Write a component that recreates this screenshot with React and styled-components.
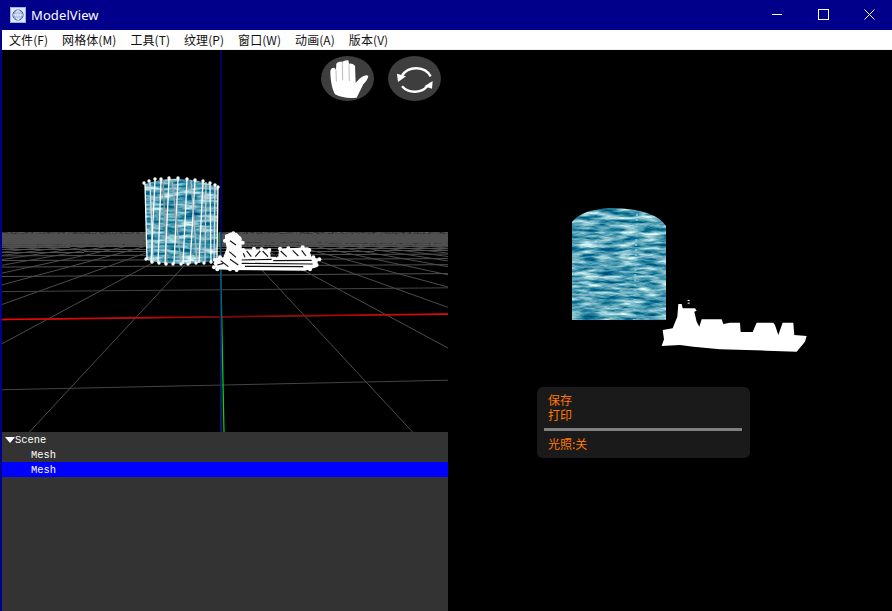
import React from "react"
import styled, { createGlobalStyle } from "styled-components"

const GlobalStyle = createGlobalStyle`
  html, body {
    margin: 0;
    padding: 0;
    background: #000;
    overflow: hidden;
  }
`

const Window = styled.div`
  width: 892px;
  height: 611px;
  display: flex;
  flex-direction: column;
  background: #00008b;
  font-family: "Noto Sans", "Noto Sans CJK SC", sans-serif;
`

const TitleBar = styled.div`
  height: 30px;
  display: flex;
  align-items: center;
  color: #fff;
  flex-shrink: 0;
`

const AppIcon = styled.svg`
  width: 16px;
  height: 16px;
  margin-left: 10px;
  margin-right: 5px;
`

const Title = styled.span`
  flex: 1;
  font-size: 13px;
  letter-spacing: 0.1px;
`

const WinButton = styled.div`
  width: 46px;
  height: 30px;
  display: flex;
  align-items: center;
  justify-content: center;
  padding-bottom: 2px;
  box-sizing: border-box;
`

const MinDash = styled.div`
  width: 10px;
  height: 1px;
  background: #fff;
`

const MaxBox = styled.div`
  width: 9px;
  height: 9px;
  border: 1px solid #fff;
`

const CloseIcon = styled.svg`
  width: 11px;
  height: 11px;
`

const MenuBar = styled.div`
  height: 19px;
  margin-left: 2px;
  background: #fff;
  border-bottom: 1px solid #f0f0f0;
  display: flex;
  align-items: center;
  flex-shrink: 0;
`

const MenuItem = styled.span`
  padding: 0 7px;
  font-size: 12px;
  line-height: 19px;
  letter-spacing: 0.07px;
  color: #111;
  font-family: "Noto Sans CJK SC", "Noto Sans", sans-serif;
`

const Body = styled.div`
  flex: 1;
  display: flex;
  margin-left: 2px;
  min-height: 0;
`

const LeftPane = styled.div`
  width: 446px;
  display: flex;
  flex-direction: column;
`

const Viewport = styled.div`
  position: relative;
  height: 382px;
  background: #000;
`

const Drawing = styled.svg`
  display: block;
  width: 100%;
  height: 100%;
`

const ToolButtons = styled.div`
  position: absolute;
  top: 6px;
  right: 7px;
  display: flex;
  gap: 14px;
`

const RoundButton = styled.div`
  width: 53px;
  height: 45px;
  border-radius: 50%;
  background: #3e3e3e;
`

const ButtonIcon = styled.svg`
  display: block;
  width: 65px;
  height: 55px;
  margin: -5px 0 0 -6px;
`

const Tree = styled.div`
  flex: 1;
  background: #333;
  color: #fff;
  font-family: "Liberation Mono", monospace;
  font-size: 10.4px;
`

const TreeRow = styled.div`
  height: 15px;
  box-sizing: border-box;
  padding-top: 2px;
  line-height: 13px;
  display: flex;
  align-items: center;
  padding-left: ${(p) => p.$indent}px;
  background: ${(p) => (p.$selected ? "#0000ff" : "transparent")};
`

const Arrow = styled.span`
  width: 0;
  height: 0;
  margin-bottom: 1px;
  border-left: 5px solid transparent;
  border-right: 5px solid transparent;
  border-top: 6px solid #fff;
`

const RightView = styled.div`
  position: relative;
  flex: 1;
  background: #000;
`

const FloatPanel = styled.div`
  position: absolute;
  left: 89px;
  top: 337px;
  width: 213px;
  height: 71px;
  box-sizing: border-box;
  padding: 5px 7px 0;
  background: #1a1a1a;
  border-radius: 6px;
  color: #ff7700;
  font-size: 12px;
  font-family: "Noto Sans CJK SC", sans-serif;
`

const PanelLine = styled.div`
  height: 15px;
  line-height: 15px;
  padding-left: 4px;
`

const Separator = styled.div`
  height: 3px;
  margin: 6px 1px 5px 0;
  background: #808080;
`

const menus = ["文件(F)", "网格体(M)", "工具(T)", "纹理(P)", "窗口(W)", "动画(A)", "版本(V)"]

// ground grid, projected by hand from the reference
const VX = 221
const VY = 226
const hLines = Array.from({ length: 24 }, (_, n) => 1 / (0.00629 + 0.0047 * n))
const radials = Array.from({ length: 81 }, (_, i) => i - 40)

function Ground() {
  return (
    <g clipPath="url(#groundClip)" strokeWidth="1">
      <rect x="2" y="232" width="446" height="15" filter="url(#gravel)" />
      {radials.map((k) => (
        <line key={k} x1={VX + k * 0.93 * 18} y1={244} x2={VX + k * 0.93 * 206} y2={432} stroke="#4c4c4c" />
      ))}
      {hLines.map((d, n) => (
        <line key={n} x1={2} y1={VY + d * 1.03} x2={448} y2={VY + d * 0.97} stroke={n < 3 ? "#444" : "#505050"} shapeRendering={n > 6 ? "crispEdges" : "auto"} />
      ))}
    </g>
  )
}

function Water({ clip, x, y, width, height }) {
  return <rect clipPath={`url(#${clip})`} filter="url(#water)" x={x} y={y} width={width} height={height} />
}

const topDots = [[144, 183], [149, 181], [155, 179], [161, 179], [169, 178], [178, 178], [187, 179], [195, 180], [203, 181], [210, 183], [215, 185], [218, 187]]
const bottomDots = [[146, 259], [152, 262], [159, 263], [166, 264], [173, 264], [181, 264], [188, 264], [196, 263], [204, 263], [211, 262], [217, 260]]
const cageBars = [
  [145, 184, 147, 260, "#fff"], [150, 182, 153, 261, "#ddd"], [155, 180, 151, 262, "#fff"], [161, 180, 158, 263, "#fff"],
  [163, 180, 167, 264, "#999"], [169, 179, 165, 264, "#fff"], [178, 179, 174, 264, "#fff"], [172, 179, 181, 264, "#aaa"],
  [187, 179, 183, 264, "#fff"], [195, 181, 190, 264, "#fff"], [191, 180, 197, 263, "#bbb"], [203, 182, 199, 263, "#fff"],
  [206, 182, 205, 262, "#ccc"], [210, 184, 211, 262, "#fff"], [215, 185, 214, 261, "#ddd"], [218, 187, 217, 260, "#fff"],
]

// ship wireframe in reference zoom coords (3x, from 130,170)
const shipBody = "285,195 300,188 320,188 335,205 335,235 345,238 420,238 422,260 445,260 447,236 535,232 545,262 565,266 560,292 525,302 300,300 262,298 250,280 262,265 280,262 290,235 285,205"
const shipSlits = [
  "350,243 364,260", "376,260 392,241", "398,243 414,260", "452,243 470,260", "488,241 505,258", "515,241 528,258",
  "335,270 425,268", "335,280 548,282", "345,289 520,290", "298,245 318,262", "272,272 295,290", "300,212 318,225", "430,272 545,271",
  "300,268 325,285", "262,285 280,280", "340,250 345,262", "432,245 440,262",
]
const shipDots = [
  [310, 190], [298, 200], [328, 205], [285, 212], [338, 218], [340, 240], [372, 236], [395, 238], [418, 240], [450, 236], [475, 235],
  [518, 232], [538, 240], [550, 262], [568, 268], [560, 285], [540, 298], [270, 262], [255, 270], [252, 292], [262, 298], [300, 298], [320, 300],
]

const shipSolid = "305,438 312,418 308,390 338,385 352,350 355,312 365,312 368,325 405,325 410,332 403,335 410,365 418,380 425,358 485,358 490,372 510,368 540,368 542,396 578,396 590,368 640,368 645,375 655,405 668,368 700,368 703,405 740,408 735,425 710,455 620,452 480,448 400,440 360,435"

export default function App() {
  return (
    <Window>
      <GlobalStyle />
      <TitleBar>
        <AppIcon viewBox="0 0 16 16">
          <rect x="0.5" y="0.5" width="15" height="15" fill="#dfe8f6" stroke="#9db5dc" />
          <circle cx="8" cy="8" r="5.2" fill="#8fa6d8" stroke="#5a6fb5" />
          <path d="M8 2.8v10.4M2.8 8h10.4M8 2.8c-3 2.5-3 7.9 0 10.4M8 2.8c3 2.5 3 7.9 0 10.4" fill="none" stroke="#fff" strokeWidth="0.8" />
        </AppIcon>
        <Title>ModelView</Title>
        <WinButton><MinDash /></WinButton>
        <WinButton><MaxBox /></WinButton>
        <WinButton>
          <CloseIcon viewBox="0 0 11 11">
            <path d="M0.5 0.5L10.5 10.5M10.5 0.5L0.5 10.5" stroke="#fff" strokeWidth="1" fill="none" />
          </CloseIcon>
        </WinButton>
      </TitleBar>
      <MenuBar>
        {menus.map((m) => (
          <MenuItem key={m}>{m}</MenuItem>
        ))}
      </MenuBar>
      <Body>
        <LeftPane>
          <Viewport>
            <Drawing viewBox="2 50 446 382">
              <defs>
                <clipPath id="groundClip"><rect x="2" y="232" width="446" height="200" /></clipPath>
                <clipPath id="cageClip"><path d="M145 184 Q180 172 218 187 L217 260 Q180 268 147 260Z" /></clipPath>
                <filter id="water" x="0" y="0" width="100%" height="100%" colorInterpolationFilters="sRGB">
                  <feTurbulence type="fractalNoise" baseFrequency="0.05 0.25" numOctaves="4" seed="7" />
                  <feColorMatrix values="1.7 0 0 0 -0.5  1.1 0 0 0 0.09  0.8 0 0 0 0.32  0 0 0 0 1" />
                </filter>
                <filter id="gravel" x="0" y="0" width="100%" height="100%" colorInterpolationFilters="sRGB">
                  <feTurbulence type="fractalNoise" baseFrequency="0.35 0.8" numOctaves="2" seed="3" />
                  <feColorMatrix values="1 0 0 0 0  1 0 0 0 0  1 0 0 0 0  0 0 0 0 1" />
                  <feComponentTransfer>
                    <feFuncR type="discrete" tableValues="0.12 0.2 0.27 0.33 0.38" />
                    <feFuncG type="discrete" tableValues="0.12 0.2 0.27 0.33 0.38" />
                    <feFuncB type="discrete" tableValues="0.12 0.2 0.27 0.33 0.38" />
                  </feComponentTransfer>
                </filter>
                <linearGradient id="redAxis" x1="0" x2="1" y1="0" y2="0">
                  <stop offset="0" stopColor="#f00" />
                  <stop offset="0.3" stopColor="#d00" />
                  <stop offset="0.48" stopColor="#800" />
                  <stop offset="0.68" stopColor="#a00" />
                  <stop offset="1" stopColor="#f00" />
                </linearGradient>
              </defs>
              <Ground />
              <line x1="2" y1="319.4" x2="448" y2="314" stroke="url(#redAxis)" strokeWidth="1.5" />
              <line x1="220" y1="232" x2="224" y2="432" stroke="#00e000" strokeWidth="1.2" />
              <line x1="221" y1="50" x2="221" y2="432" stroke="#0000c8" strokeWidth="1" />
              <Water clip="cageClip" x={144} y={176} width={76} height={90} />
              {cageBars.map(([x1, y1, x2, y2, c], i) => (
                <line key={i} x1={x1} y1={y1} x2={x2} y2={y2} stroke={c} strokeWidth="1.3" />
              ))}
              {[...topDots, ...bottomDots].map(([x, y], i) => (
                <circle key={i} cx={x} cy={y} r="1.7" fill="#fff" />
              ))}
              <g transform="translate(130 170) scale(0.3333)">
                <polygon points={shipBody} fill="#fff" />
                {shipSlits.map((p, i) => (
                  <polyline key={i} points={p} fill="none" stroke="#111" strokeWidth="3.5" />
                ))}
                {shipDots.map(([x, y], i) => (
                  <circle key={i} cx={x} cy={y} r="6" fill="#fff" />
                ))}
              </g>
            </Drawing>
            <ToolButtons>
              <RoundButton>
                <ButtonIcon viewBox="0 0 195 165">
                  <path d="M60 130C52 115 46 90 46 60Q48 50 56 50Q62 50 63 58L64 38Q68 32 74 32L82 32Q90 26 100 28L102 38Q112 36 120 44L122 95L135 82Q150 70 160 74Q160 84 145 100Q135 120 125 140Q90 145 60 130Z" fill="#fff" />
                  <path d="M63 58L64 92M82 34L83 88M102 40L103 90" fill="none" stroke="#999" strokeWidth="2" />
                </ButtonIcon>
              </RoundButton>
              <RoundButton>
                <ButtonIcon viewBox="0 0 195 165">
                  <path d="M45 68L48 93L72 76Z" fill="#fff" />
                  <path d="M60 74A48 42 0 0 1 146 76" fill="none" stroke="#fff" strokeWidth="7" />
                  <path d="M152 90L150 113L127 106Z" fill="#fff" />
                  <path d="M136 106A48 42 0 0 1 60 106" fill="none" stroke="#fff" strokeWidth="7" />
                </ButtonIcon>
              </RoundButton>
            </ToolButtons>
          </Viewport>
          <Tree>
            <TreeRow $indent={3}><Arrow />Scene</TreeRow>
            <TreeRow $indent={29}>Mesh</TreeRow>
            <TreeRow $indent={29} $selected>Mesh</TreeRow>
          </Tree>
        </LeftPane>
        <RightView>
          <Drawing viewBox="448 50 444 561">
            <defs>
              <clipPath id="tankClip"><path d="M572 222Q582 209 612 208Q655 209 666 226L666 320L572 320Z" /></clipPath>
            </defs>
            <Water clip="tankClip" x={570} y={206} width={98} height={116} />
            <path d="M637 214L634 320" stroke="#7cc4d8" strokeWidth="2" strokeDasharray="2 3" fill="none" clipPath="url(#tankClip)" />
            <g transform="translate(560 200) scale(0.3333)">
              <polygon points={shipSolid} fill="#fff" />
              <rect x="383" y="300" width="6" height="3" fill="#fff" />
              <rect x="383" y="308" width="6" height="3" fill="#fff" />
            </g>
          </Drawing>
          <FloatPanel>
            <PanelLine>保存</PanelLine>
            <PanelLine>打印</PanelLine>
            <Separator />
            <PanelLine>光照:关</PanelLine>
          </FloatPanel>
        </RightView>
      </Body>
    </Window>
  )
}
